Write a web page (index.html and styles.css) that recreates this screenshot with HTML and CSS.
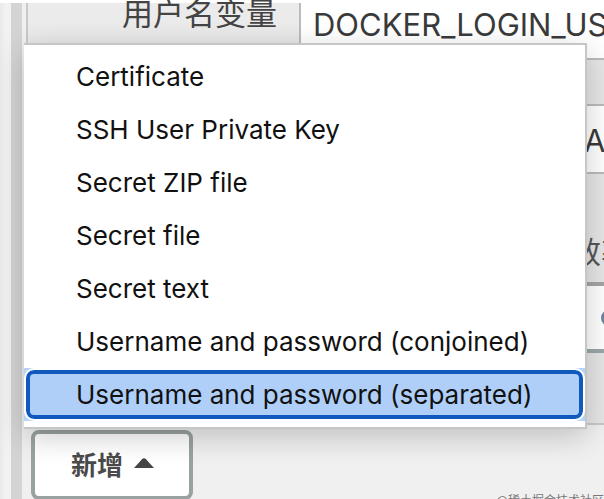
FILE: index.html
```html
<!DOCTYPE html>
<html lang="zh-CN">
<head>
<meta charset="utf-8">
<title>Bindings</title>
<link rel="stylesheet" href="styles.css">
</head>
<body>
<main class="section">
  <div class="panel">
    <form class="fields">
      <div class="field">
        <label class="name" for="user">用户名变量</label>
        <input class="value" id="user" type="text" value="DOCKER_LOGIN_US">
      </div>
      <div class="gap"></div>
      <div class="field second">
        <input class="value" type="text" aria-label="密码变量" value="A">
      </div>
      <div class="help"><span>效率</span></div>
      <div class="picker"><span class="dot"></span></div>
      <div class="rest"></div>
    </form>
    <div class="actions">
      <ul class="menu">
        <li><button type="button" class="item">Certificate</button></li>
        <li><button type="button" class="item">SSH User Private Key</button></li>
        <li><button type="button" class="item">Secret ZIP file</button></li>
        <li><button type="button" class="item">Secret file</button></li>
        <li><button type="button" class="item">Secret text</button></li>
        <li><button type="button" class="item">Username and password (conjoined)</button></li>
        <li class="current"><button type="button" class="item">Username and password (separated)</button></li>
      </ul>
      <button type="button" class="add">新增
        <svg class="caret" viewBox="0 0 20 10" aria-hidden="true"><path d="M0 10 8 1.200Q10-.5 12 1.200L20 10Z"/></svg>
      </button>
      <span class="credit">@稀土掘金技术社区</span>
    </div>
  </div>
</main>
</body>
</html>
```
FILE: styles.css
```css
* { box-sizing: border-box; }

body {
  margin: 0;
  height: 100vh;
  overflow: hidden;
  background: #fff;
  color: #333;
  font-family: Inter, "Noto Sans CJK SC", sans-serif;
}

.section {
  height: 100vh;
  margin-top: 3px;
  padding-left: 11px;
  background: linear-gradient(90deg, #e9e9e9, #f2f2f2 6px, #f2f2f2 11px, transparent 11px);
}

.panel {
  height: 100%;
  border-left: 11px solid #d4d4d4;
  background: #f0f0f0;
}

.fields {
  margin-left: 4px;
  border-left: 2px solid #c8c8c8;
  border-bottom: 2px solid #c8c8c8;
  background: #e6e6e6;
}

.field {
  display: flex;
  height: 55px;
  background: #fff;
}

.name {
  flex: 0 0 273px;
  padding-right: 22px;
  border-right: 2px solid #bbb;
  background: linear-gradient(#ebebeb 20px, #e4e4e4);
  color: #444;
  font-size: 31px;
  line-height: 22px;
  text-align: right;
}

.value {
  flex: 1;
  min-width: 0;
  padding: 0 0 12px 12px;
  border: 0;
  background: #fff;
  color: #3a3a3a;
  font: 31px Inter, sans-serif;
}

.gap {
  height: 48px;
  border: solid #bbb;
  border-width: 2px 0;
}

.second {
  height: 66px;
  border-left: 544px solid #fff;
}

.second .value {
  padding: 2px 0 0 12px;
}

.help {
  height: 110px;
  padding: 60px 0 0 543px;
  border-top: 2px solid #bbb;
  overflow: hidden;
  color: #555;
  font-size: 30px;
  line-height: 36px;
  white-space: nowrap;
}

.picker {
  display: flex;
  align-items: center;
  height: 71px;
  padding-left: 573px;
  border: solid #a4a4a4;
  border-width: 4px 0;
  border-bottom-color: #9ca6ab;
  background: #fff;
}

.dot {
  flex: 0 0 16px;
  height: 16px;
  border: 4px solid #7183a0;
  border-radius: 50%;
}

.rest { height: 70px; }

.actions {
  position: relative;
  display: flex;
  justify-content: space-between;
  align-items: flex-start;
  padding: 5px 0 0 9px;
}

.menu {
  position: absolute;
  left: 2px;
  right: 17px;
  bottom: 82px;
  margin: 0;
  padding: 5px 0 6px;
  border: 2px solid #c6c6c6;
  border-left: 0;
  background: #fff;
  box-shadow: 0 8px 28px rgba(0, 0, 0, .2);
  list-style: none;
}

.item {
  display: block;
  width: 100%;
  height: 53px;
  padding: 0 48px;
  border: 4px solid transparent;
  background: none;
  color: #111;
  font: 26px/44px Inter, sans-serif;
  text-align: left;
  white-space: nowrap;
}

.current {
  padding: 2px;
  background: #b5d4fb;
}

.current .item {
  height: 49px;
  padding: 0 46px;
  border-color: #1259bd;
  border-radius: 8px;
  background: #afcff8;
  line-height: 40px;
  outline: 2px solid #fff;
}

.add {
  display: flex;
  align-items: center;
  gap: 11px;
  height: 70px;
  padding: 0 35px 4px 36px;
  border: 4px solid #9aa1a1;
  border-radius: 8px;
  background: #fff;
  color: #4a4a4a;
  font: 700 26px "Noto Sans CJK SC", sans-serif;
}

.caret {
  width: 20px;
  height: 10px;
  fill: #444;
}

.credit {
  margin-top: 61px;
  color: #777;
  font-size: 12px;
  line-height: 20px;
  white-space: nowrap;
}
```
